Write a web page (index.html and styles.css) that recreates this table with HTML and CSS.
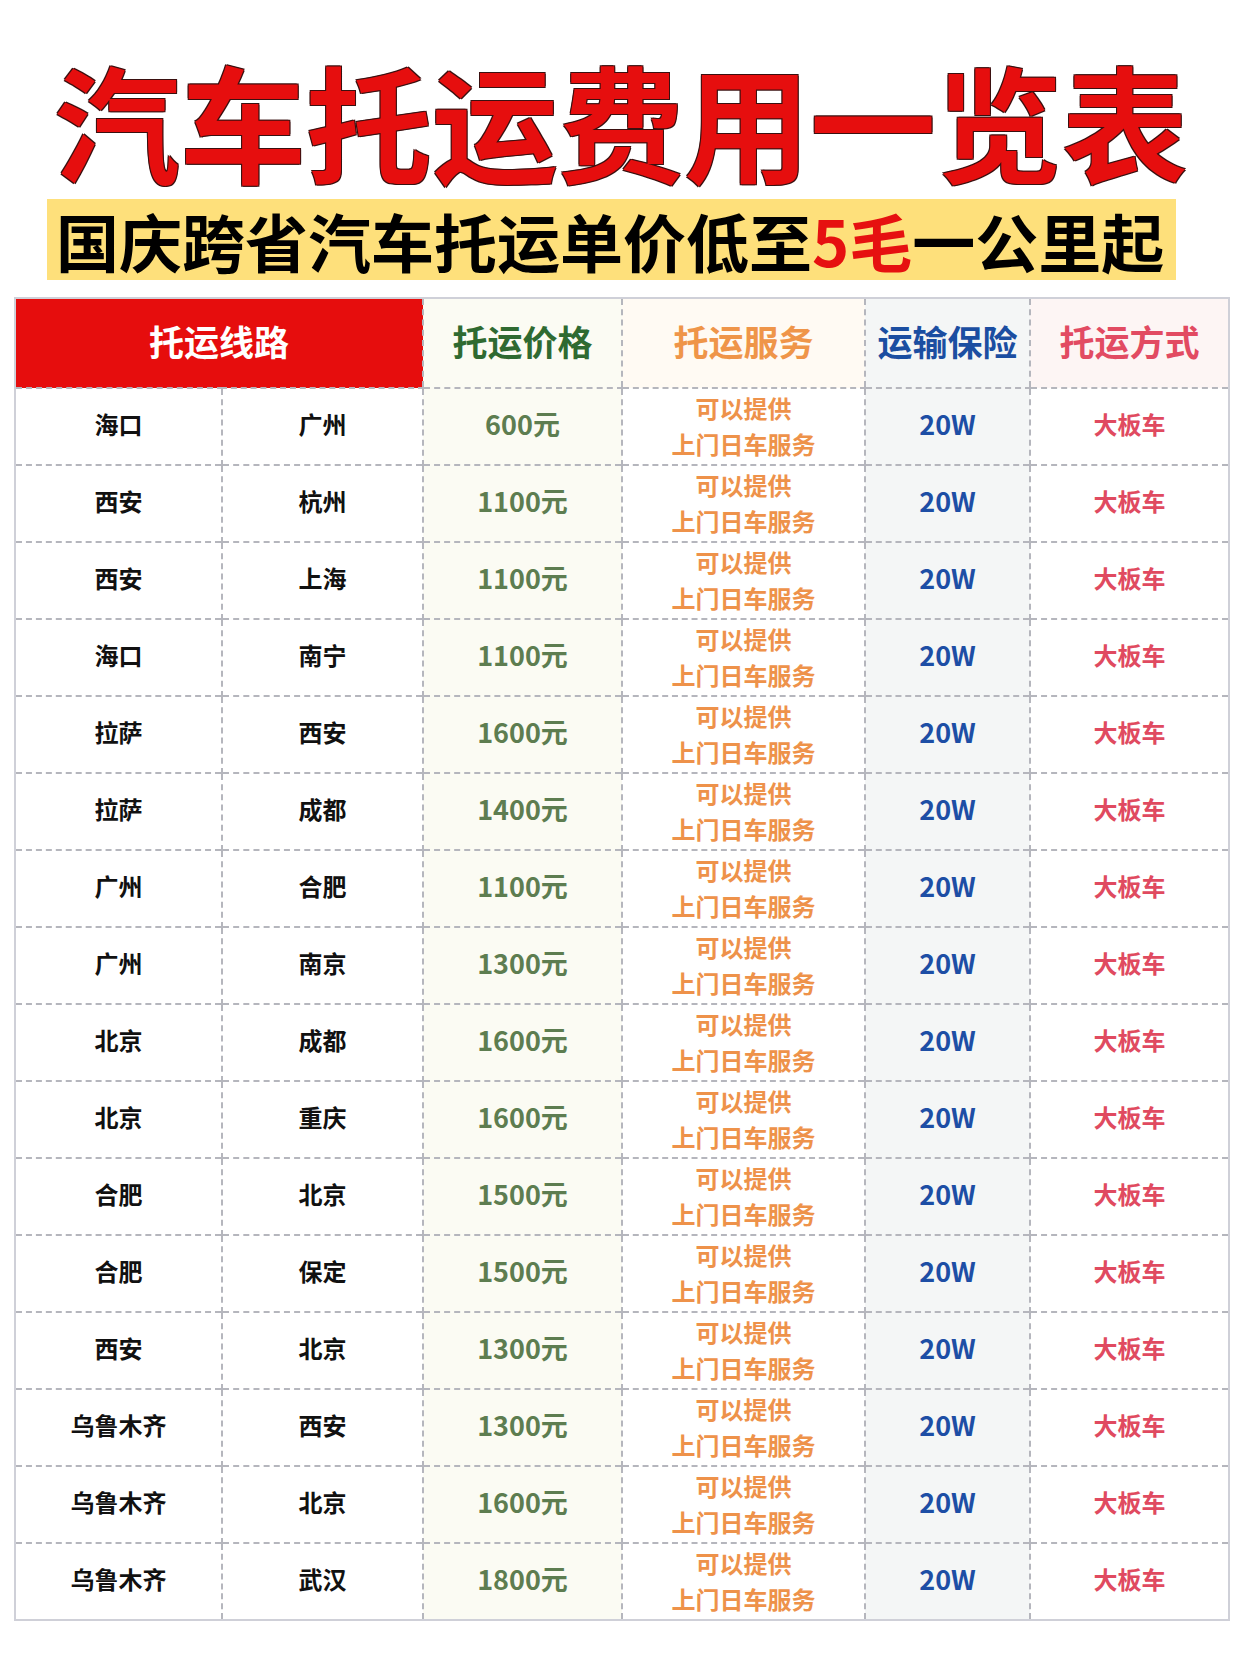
FILE: index.html
```html
<!DOCTYPE html>
<html lang="zh-CN">
<head>
<meta charset="utf-8">
<title>汽车托运费用一览表</title>
<link rel="stylesheet" href="styles.css">
</head>
<body>
<div class="page">
  <h1 class="title">汽车托运费用一览表</h1>
  <div class="banner">国庆跨省汽车托运单价低至<span class="hl">5毛</span>一公里起</div>
  <table class="fees">
    <colgroup>
      <col class="c1"><col class="c2"><col class="c3"><col class="c4"><col class="c5"><col class="c6">
    </colgroup>
    <thead>
      <tr>
        <th colspan="2" class="h-route">托运线路</th>
        <th class="h-price">托运价格</th>
        <th class="h-service">托运服务</th>
        <th class="h-ins">运输保险</th>
        <th class="h-method">托运方式</th>
      </tr>
    </thead>
    <tbody id="rows">
      <tr><td class="city">海口</td><td class="city">广州</td><td class="price">600元</td><td class="service">可以提供<br>上门日车服务</td><td class="ins">20W</td><td class="method">大板车</td></tr>
      <tr><td class="city">西安</td><td class="city">杭州</td><td class="price">1100元</td><td class="service">可以提供<br>上门日车服务</td><td class="ins">20W</td><td class="method">大板车</td></tr>
      <tr><td class="city">西安</td><td class="city">上海</td><td class="price">1100元</td><td class="service">可以提供<br>上门日车服务</td><td class="ins">20W</td><td class="method">大板车</td></tr>
      <tr><td class="city">海口</td><td class="city">南宁</td><td class="price">1100元</td><td class="service">可以提供<br>上门日车服务</td><td class="ins">20W</td><td class="method">大板车</td></tr>
      <tr><td class="city">拉萨</td><td class="city">西安</td><td class="price">1600元</td><td class="service">可以提供<br>上门日车服务</td><td class="ins">20W</td><td class="method">大板车</td></tr>
      <tr><td class="city">拉萨</td><td class="city">成都</td><td class="price">1400元</td><td class="service">可以提供<br>上门日车服务</td><td class="ins">20W</td><td class="method">大板车</td></tr>
      <tr><td class="city">广州</td><td class="city">合肥</td><td class="price">1100元</td><td class="service">可以提供<br>上门日车服务</td><td class="ins">20W</td><td class="method">大板车</td></tr>
      <tr><td class="city">广州</td><td class="city">南京</td><td class="price">1300元</td><td class="service">可以提供<br>上门日车服务</td><td class="ins">20W</td><td class="method">大板车</td></tr>
      <tr><td class="city">北京</td><td class="city">成都</td><td class="price">1600元</td><td class="service">可以提供<br>上门日车服务</td><td class="ins">20W</td><td class="method">大板车</td></tr>
      <tr><td class="city">北京</td><td class="city">重庆</td><td class="price">1600元</td><td class="service">可以提供<br>上门日车服务</td><td class="ins">20W</td><td class="method">大板车</td></tr>
      <tr><td class="city">合肥</td><td class="city">北京</td><td class="price">1500元</td><td class="service">可以提供<br>上门日车服务</td><td class="ins">20W</td><td class="method">大板车</td></tr>
      <tr><td class="city">合肥</td><td class="city">保定</td><td class="price">1500元</td><td class="service">可以提供<br>上门日车服务</td><td class="ins">20W</td><td class="method">大板车</td></tr>
      <tr><td class="city">西安</td><td class="city">北京</td><td class="price">1300元</td><td class="service">可以提供<br>上门日车服务</td><td class="ins">20W</td><td class="method">大板车</td></tr>
      <tr><td class="city">乌鲁木齐</td><td class="city">西安</td><td class="price">1300元</td><td class="service">可以提供<br>上门日车服务</td><td class="ins">20W</td><td class="method">大板车</td></tr>
      <tr><td class="city">乌鲁木齐</td><td class="city">北京</td><td class="price">1600元</td><td class="service">可以提供<br>上门日车服务</td><td class="ins">20W</td><td class="method">大板车</td></tr>
      <tr><td class="city">乌鲁木齐</td><td class="city">武汉</td><td class="price">1800元</td><td class="service">可以提供<br>上门日车服务</td><td class="ins">20W</td><td class="method">大板车</td></tr>
    </tbody>
  </table>
</div>
</body>
</html>
```

FILE: styles.css
```css
* { box-sizing: border-box; }
html, body {
  margin: 0;
  padding: 0;
  background: #ffffff;
}
body {
  font-family: "Noto Sans CJK SC", "Noto Sans", sans-serif;
  width: 1242px;
  height: 1656px;
  overflow: hidden;
}
.page {
  padding-top: 49px;
}
.title {
  margin: 0;
  height: 140px;
  font-size: 126px;
  line-height: 140px;
  font-weight: 700;
  color: #e60e0e;
  text-align: center;
  letter-spacing: 0;
  text-shadow:
    1px 1px 0 #3a1010, -1px -1px 0 #3a1010,
    1px -1px 0 #3a1010, -1px 1px 0 #3a1010;
}
.banner {
  margin: 10px 0 0 47px;
  width: 1129px;
  height: 81px;
  background: #fee07b;
  padding-left: 9px;
  font-size: 63px;
  line-height: 81px;
  font-weight: 700;
  color: #000;
  white-space: nowrap;
}
.banner .hl {
  color: #e61010;
}
.fees {
  margin: 17px 0 0 14px;
  width: 1214px;
  border-collapse: collapse;
  table-layout: fixed;
  border: 2px solid #cfd0d8;
}
.c1 { width: 207px; }
.c2 { width: 201px; }
.c3 { width: 199px; }
.c4 { width: 243px; }
.c5 { width: 165px; }
.c6 { width: 199px; }
.fees th {
  height: 90px;
  font-size: 35px;
  font-weight: 700;
  text-align: center;
  padding: 0 0 6px;
  border-left: 2px dashed #b5b6bd;
  border-bottom: 2px dashed #b5b6bd;
}
.fees td {
  height: 77px;
  padding: 0 0 5px;
  line-height: 1.2;
  text-align: center;
  border-left: 2px dashed #b5b6bd;
  border-top: 2px dashed #b5b6bd;
}
.h-route { background: #e60d0d; color: #fff; }
.h-price { background: #fbfbf3; color: #2f6a31; }
.h-service { background: #fffaf3; color: #ef9549; }
.h-ins { background: #f4f6f6; color: #1b4ea1; }
.h-method { background: #fdf5f4; color: #e24b62; }
.city {
  font-size: 24px;
  font-weight: 700;
  color: #111;
}
.price {
  background: #fbfbf3;
  font-size: 27px;
  font-weight: 700;
  color: #5d7d50;
}
.fees td.service {
  padding: 0 0 2px;
  font-size: 24px;
  line-height: 36px;
  font-weight: 700;
  color: #ee924a;
}
.ins {
  background: #f4f6f6;
  font-size: 27px;
  font-weight: 700;
  color: #1d4ea5;
}
.method {
  font-size: 24px;
  font-weight: 700;
  color: #e04a60;
}
```
